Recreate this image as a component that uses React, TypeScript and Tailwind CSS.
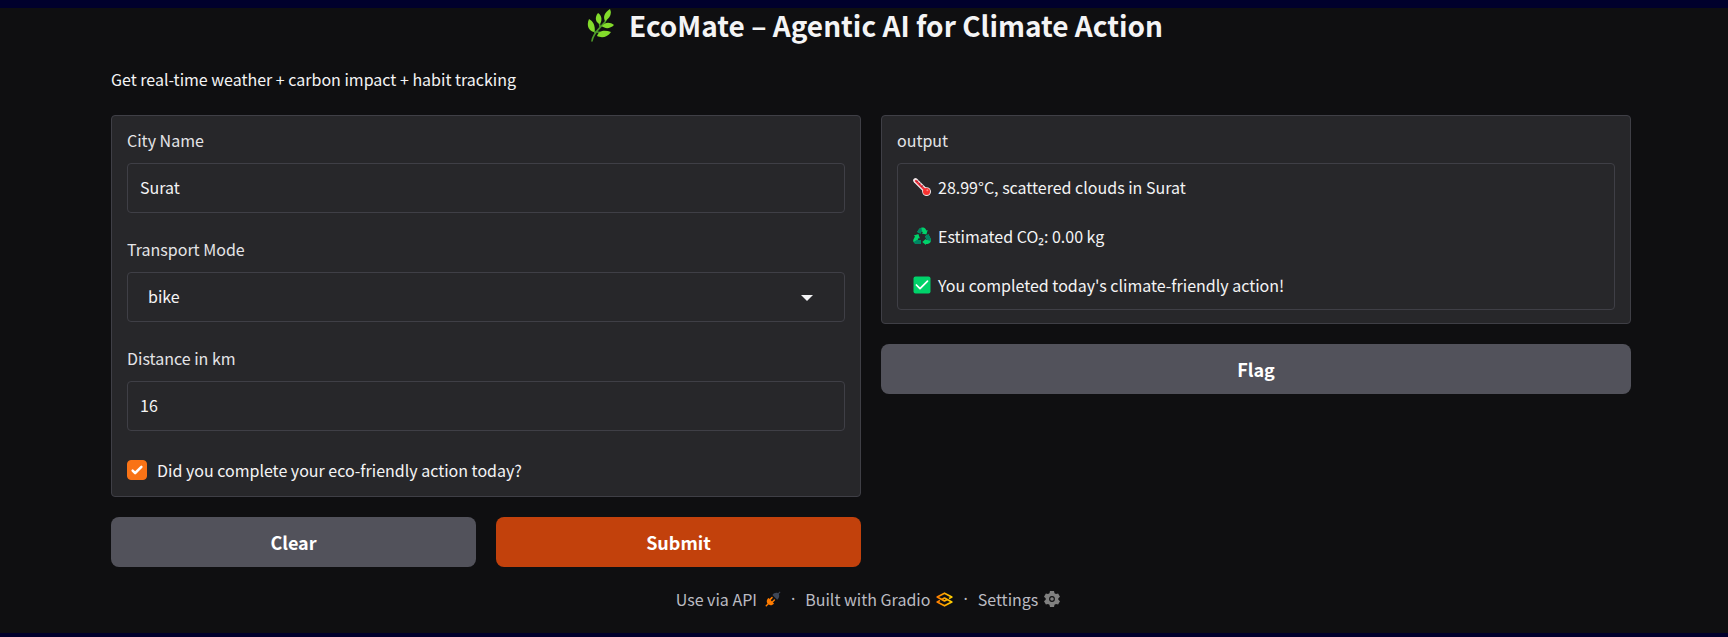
import { useState } from "react";

const field =
  "h-[50px] w-full rounded border border-[#3f3f46] bg-[#27272a] px-3 pb-[2px] text-base text-[#f4f4f5] outline-none focus:border-orange-500";
const panel = "rounded border border-[#3f3f46] bg-[#27272a] px-[15px]";
const label = "block text-base leading-6 text-[#e4e4e7]";
const button = "h-[50px] rounded-lg pb-px text-lg font-bold text-white";

function Leaf() {
  return (
    <svg viewBox="0 0 32 34" className="h-[34px] w-8" aria-hidden="true">
      <path d="M7 33 C8 25 15 20 20 14 C22 10 23 7 25 4 M10 25 L8 18 M15 19 L14 12 M17 18 L25 17 M12 24 L20 25" fill="none" stroke="#4f9a2b" strokeWidth="1.6" strokeLinecap="round" />
      <g fill="#83db2b">
        <path d="M25 1 C19 5 18 9 20 13 C25 10 27 6 25 1Z" />
        <path d="M13 5 C9 10 11 15 15 16 C18 11 16 7 13 5Z" />
        <path d="M4 11 C1 18 4 23 9 24 C11 18 8 13 4 11Z" />
        <path d="M17 18 C20 14 25 14 29 17 C25 21 20 21 17 18Z" />
        <path d="M12 28 C14 22 20 22 26 24 C22 30 16 30 12 28Z" />
      </g>
    </svg>
  );
}

function Thermometer() {
  return (
    <svg viewBox="0 0 18 18" className="size-[18px]" aria-hidden="true">
      <path d="M2.5 2.5 L13.5 13.5" stroke="#f3e9ea" strokeWidth="4.6" strokeLinecap="round" />
      <circle cx="13.6" cy="13.6" r="4.4" fill="#f3e9ea" />
      <path d="M3 3 L13 13" stroke="#ef2f3c" strokeWidth="2.4" strokeLinecap="round" />
      <circle cx="13.5" cy="13.5" r="3.5" fill="#f8312f" />
      <circle cx="14.4" cy="12.2" r="1" fill="#ff8687" />
      <path d="M5 2.6 L3.8 3.8 M7.4 5 L6.2 6.2 M9.8 7.4 L8.6 8.6" stroke="#30242a" strokeWidth="1" />
    </svg>
  );
}

function Recycle() {
  return (
    <svg viewBox="0 0 18 18" className="size-[18px]" aria-hidden="true">
      <path d="M5.4 3 Q6.6 .5 9 .5 H10.4 Q11.8 .6 12.6 2 L13.4 3.6 L14.7 3 L13.4 7.6 L8.6 6.6 L9.8 5.8 L8.8 4 L7.4 6.6 L4.2 5Z" fill="#00d26a" />
      <path d="M5.4 3 Q6.6 .7 8.4 .7 L9 3.8 L7.5 6.7 L4.2 5Z" fill="#008463" />
      <path d="M.8 8.4 L5.4 7 L6.9 11.6 L5.7 11 L4.6 13 H8 V17 H3.4 Q1.2 16.8 .4 14.8 Q-.1 13.2 .8 11.8 L2 9.4Z" fill="#00d26a" />
      <path d="M3.8 13 H8 V17 H3.3 Q1.4 16.7 .6 15Z" fill="#008463" />
      <path d="M12 9.2 L15.4 7.2 L17.6 11.6 Q18.4 13.8 17.2 15.6 Q16.2 17 14.4 17 H12.9 V18 L9.3 15 L12.9 11.8 V13 H14Z" fill="#00d26a" />
      <path d="M12 9.2 L15.4 7.2 L17.5 11.4 Q18 12.8 17.5 14 L14 13Z" fill="#008463" />
    </svg>
  );
}

function CheckMark() {
  return (
    <svg viewBox="0 0 18 18" className="size-[18px]" aria-hidden="true">
      <rect x=".5" y=".5" width="17" height="17" rx="2" fill="#00d26a" />
      <path d="M3.4 9 L7 12.7 L14.5 5.2" fill="none" stroke="#fff" strokeWidth="1.7" strokeLinecap="round" strokeLinejoin="round" />
    </svg>
  );
}

function Plug() {
  return (
    <svg viewBox="0 0 16 16" className="size-4" aria-hidden="true">
      <path d="M.8 15.2 L3.5 12.5" stroke="#ff7c00" strokeWidth="1.3" />
      <path d="M3.6 7 L9 12.4 C7.6 14.4 4.8 14.9 3 13.1 C1.1 11.2 1.6 8.4 3.6 7Z" fill="#ff7c00" />
      <path d="M5 8.6 L7 6.6 M7.4 11 L9.4 9" stroke="#ff7c00" strokeWidth="1.5" strokeLinecap="round" />
      <path d="M7.4 4 C8.8 1.9 11.4 1.4 13 2.3 L14.8 .5 L15.5 1.2 L13.8 3 C14.8 4.8 14 7.2 12.2 8.7Z" fill="#3d4657" />
    </svg>
  );
}

function GradioLogo() {
  return (
    <svg viewBox="0 0 17 15" className="h-[15px] w-[17px]" aria-hidden="true">
      <defs>
        <linearGradient id="gradio-fill" gradientUnits="userSpaceOnUse" x1="1" y1="0" x2="16" y2="0">
          <stop offset="0" stopColor="#ff7c00" />
          <stop offset="1" stopColor="#ffd000" />
        </linearGradient>
      </defs>
      <g fill="none" stroke="url(#gradio-fill)" strokeWidth="1.7" strokeLinejoin="round">
        <path d="M11.2 7.6 L8.5 9 L1.2 5 L8.5 1.2 L15.8 5 L13 6.5" />
        <path d="M5.8 7.4 L8.5 6 L15.8 10 L8.5 13.8 L1.2 10 L4 8.5" />
      </g>
    </svg>
  );
}

function Gear() {
  return (
    <svg viewBox="0 0 16 16" className="size-4" aria-hidden="true">
      <path fill="#808080" fillRule="evenodd" d="M6 0 H10 L10.5 2.3 L12 3.1 L14.1 2.4 L16 5.7 L14.3 7.2 V8.8 L16 10.3 L14.1 13.6 L12 12.9 L10.5 13.7 L10 16 H6 L5.5 13.7 L4 12.9 L1.9 13.6 L0 10.3 L1.7 8.8 V7.2 L0 5.7 L1.9 2.4 L4 3.1 L5.5 2.3Z M8 5.1 A2.9 2.9 0 1 0 8 10.9 A2.9 2.9 0 1 0 8 5.1Z" />
      <circle cx="8" cy="8" r="1.8" fill="#808080" />
    </svg>
  );
}

export default function App() {
  const [city, setCity] = useState("Surat");
  const [mode, setMode] = useState("bike");
  const [distance, setDistance] = useState("16");
  const [done, setDone] = useState(true);

  const clear = () => {
    setCity("");
    setDistance("");
    setDone(false);
  };

  return (
    <div className="flex min-h-screen flex-col border-t-8 border-b-4 border-[#00002c] bg-[#0f0f11] pr-[97px] pl-[111px] font-['Noto_Sans_CJK_SC','Noto_Sans',sans-serif] text-base text-[#f4f4f5]">
      <header>
        <h1 className="flex items-center justify-center gap-3 pl-[6px] text-[28px] leading-8 font-bold">
          <Leaf />
          EcoMate – Agentic AI for Climate Action
        </h1>
        <p className="mt-[25px] leading-6">Get real-time weather + carbon impact + habit tracking</p>
      </header>

      <main className="mt-6 grid grid-cols-2 items-start gap-5">
        <form className="flex flex-col gap-5" onSubmit={(e) => e.preventDefault()}>
          <div className={`${panel} flex flex-col gap-6 pt-3 pb-[14px]`}>
            <div className="flex flex-col gap-[11px]">
              <label htmlFor="city" className={label}>City Name</label>
              <input id="city" className={field} value={city} onChange={(e) => setCity(e.target.value)} />
            </div>
            <div className="flex flex-col gap-[11px]">
              <label htmlFor="mode" className={label}>Transport Mode</label>
              <div className="relative">
                <select
                  id="mode"
                  className="h-[50px] w-full appearance-none rounded border border-[#3f3f46] bg-[#27272a] px-5 pb-[2px] text-base text-[#f4f4f5] outline-none focus:border-orange-500"
                  value={mode}
                  onChange={(e) => setMode(e.target.value)}
                >
                  <option>bike</option>
                  <option>car</option>
                  <option>bus</option>
                </select>
                <svg viewBox="0 0 12 6" className="pointer-events-none absolute top-[23px] right-8 h-[6px] w-3" aria-hidden="true">
                  <path d="M0 0 H12 L6 6Z" fill="#f4f4f5" />
                </svg>
              </div>
            </div>
            <div className="flex flex-col gap-[11px]">
              <label htmlFor="distance" className={label}>Distance in km</label>
              <input id="distance" inputMode="decimal" className={field} value={distance} onChange={(e) => setDistance(e.target.value)} />
            </div>
            <label className="mt-[3px] flex items-center gap-[10px] leading-6">
              <span className="relative flex">
                <input
                  type="checkbox"
                  className="peer size-5 appearance-none rounded border border-[#3f3f46] bg-[#27272a] checked:border-[#f97316] checked:bg-[#f97316]"
                  checked={done}
                  onChange={(e) => setDone(e.target.checked)}
                />
                <svg viewBox="0 0 16 16" className="pointer-events-none absolute inset-0 hidden size-5 peer-checked:block" aria-hidden="true">
                  <path d="M12.207 4.793a1 1 0 010 1.414l-5 5a1 1 0 01-1.414 0l-2-2a1 1 0 011.414-1.414L6.5 9.086l4.293-4.293a1 1 0 011.414 0z" fill="#fff" />
                </svg>
              </span>
              Did you complete your eco-friendly action today?
            </label>
          </div>
          <div className="grid grid-cols-2 gap-5">
            <button type="button" onClick={clear} className={`${button} bg-[#52525b]`}>Clear</button>
            <button type="submit" className={`${button} bg-[#c2410c]`}>Submit</button>
          </div>
        </form>

        <section className="flex flex-col gap-5">
          <div className={`${panel} pt-3 pb-[13px]`}>
            <label htmlFor="result" className={label}>output</label>
            <output id="result" className="mt-[11px] flex flex-col gap-[25px] rounded border border-[#3f3f46] px-[15px] pt-[11px] pb-3 leading-6">
              <span className="flex items-center gap-[7px]"><Thermometer />28.99°C, scattered clouds in Surat</span>
              <span className="flex items-center gap-[7px]"><Recycle />Estimated CO₂: 0.00 kg</span>
              <span className="flex items-center gap-[7px]"><CheckMark />You completed today's climate-friendly action!</span>
            </output>
          </div>
          <button type="button" className={`${button} bg-[#52525b]`}>Flag</button>
        </section>
      </main>

      <footer className="mt-5 flex items-center justify-center gap-[10px] pr-[6px] pb-5 leading-6 text-[#bbbbc2]">
        <a href="#api" className="flex items-center gap-2">Use via API <Plug /></a>
        <span className="font-['Noto_Sans']">·</span>
        <a href="#gradio" className="flex items-center gap-[6px]">Built with Gradio <GradioLogo /></a>
        <span className="font-['Noto_Sans']">·</span>
        <a href="#settings" className="flex items-center gap-[6px]">Settings <Gear /></a>
      </footer>
    </div>
  );
}
